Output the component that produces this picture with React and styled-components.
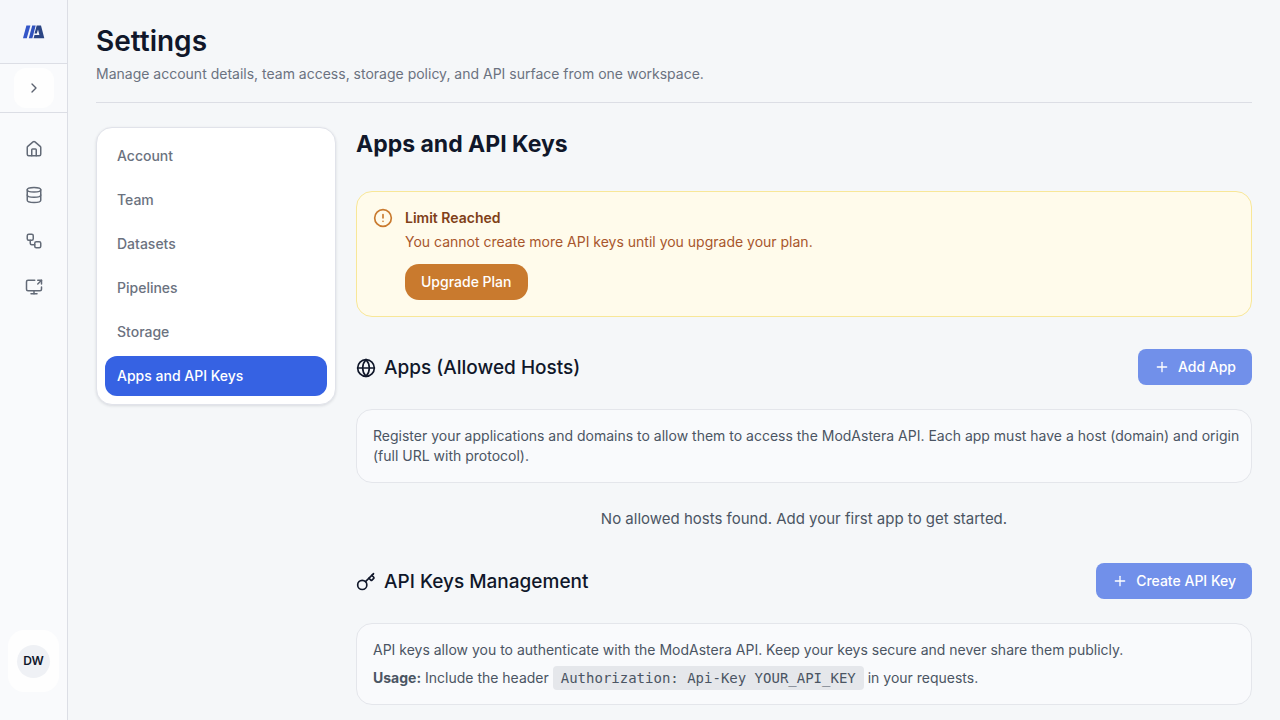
import React from "react";
import styled, { createGlobalStyle } from "styled-components";
import {
  ChevronRight,
  CircleAlert,
  Database,
  Globe,
  House,
  Key,
  Plus,
  ScreenShare,
  Workflow,
} from "lucide-react";

const GlobalStyle = createGlobalStyle`
  *, *::before, *::after { box-sizing: border-box; }
  body {
    margin: 0;
    background: #f5f7f9;
    color: #10172a;
    font-family: Inter, "Liberation Sans", sans-serif;
    font-size: 14px;
    line-height: 20px;
    -webkit-font-smoothing: antialiased;
  }
  h1, h2, h3, p { margin: 0; }
  button { font: inherit; border: 0; cursor: pointer; }
  a { color: inherit; text-decoration: none; }
`;

const Shell = styled.div`
  display: flex;
  height: 100vh;
  overflow: hidden;
`;

const Sidebar = styled.aside`
  flex: none;
  display: flex;
  flex-direction: column;
  width: 68px;
  background: #f9fafc;
  border-right: 1px solid #dcdee5;
`;

const Brand = styled.a`
  display: flex;
  align-items: center;
  justify-content: center;
  height: 64px;
  background: #f5f7fb;
  border-bottom: 1px solid #dcdee5;
`;

const ToggleRow = styled.div`
  display: flex;
  justify-content: center;
  padding: 4px 0;
  border-bottom: 1px solid #dcdee5;
`;

const ToggleButton = styled.button`
  display: grid;
  place-items: center;
  width: 40px;
  height: 40px;
  padding: 0;
  border-radius: 12px;
  background: #fefefe;
  color: #5b6270;
`;

const IconNav = styled.nav`
  flex: 1;
  display: flex;
  flex-direction: column;
  align-items: center;
  gap: 6px;
  padding: 16px 0;
`;

const IconLink = styled.a`
  display: grid;
  place-items: center;
  width: 40px;
  height: 40px;
  border-radius: 12px;
  && { color: #636a77; }
`;

const UserButton = styled.button`
  align-self: center;
  display: grid;
  place-items: center;
  width: 51px;
  height: 62px;
  margin-bottom: 28px;
  padding: 0;
  border-radius: 16px;
  background: #fefefe;
`;

const Avatar = styled.span`
  display: grid;
  place-items: center;
  width: 33px;
  height: 33px;
  border-radius: 50%;
  background: #eff1f5;
  color: #10172a;
  font-size: 12px;
  line-height: 16px;
  font-weight: 600;
`;

const Main = styled.main`
  flex: 1;
  min-width: 0;
  overflow: hidden;
  padding: 23px 28px;
`;

const PageHeader = styled.header`
  padding-bottom: 18px;
  border-bottom: 1px solid #dcdee5;
`;

const PageTitle = styled.h1`
  font-size: 28px;
  line-height: 36px;
  font-weight: 600;
`;

const PageSubtitle = styled.p`
  margin-top: 5px;
  color: #6b7280;
`;

const Columns = styled.div`
  display: grid;
  grid-template-columns: 240px minmax(0, 1fr);
  align-items: start;
  gap: 20px;
  margin-top: 24px;
`;

const SettingsNav = styled.nav`
  display: flex;
  flex-direction: column;
  gap: 4px;
  padding: 8px;
  border: 1px solid #e1e3ea;
  border-radius: 16px;
  background: #fff;
  box-shadow: 0 1px 3px rgba(15, 23, 42, 0.12);
`;

const SettingsLink = styled.a`
  padding: 10px 12px;
  border-radius: 12px;
  font-weight: 500;
  && { color: ${(p) => (p.$active ? "#fff" : "#6b7280")}; }
  background: ${(p) => (p.$active ? "#3662e3" : "transparent")};
`;

const Content = styled.div`
  display: flex;
  flex-direction: column;
  gap: 32px;
`;

const ContentTitle = styled.h2`
  padding-top: 2px;
  font-size: 23px;
  line-height: 30px;
  font-weight: 700;
`;

const Alert = styled.div`
  display: flex;
  gap: 12px;
  padding: 16px;
  border: 1px solid #f8e798;
  border-radius: 16px;
  background: #fffbeb;
  color: #a8562c;

  > svg { flex: none; color: #c97a2e; }
`;

const AlertTitle = styled.h3`
  color: #804018;
  font-size: 14px;
  line-height: 20px;
  font-weight: 600;
`;

const AlertText = styled.p`
  margin-top: 4px;
`;

const Button = styled.button`
  display: inline-flex;
  align-items: center;
  gap: 8px;
  height: 36px;
  padding: 0 16px;
  border-radius: ${(p) => (p.$warning ? "14px" : "8px")};
  background: ${(p) => (p.$warning ? "#c97a2e" : "#7190ea")};
  color: #fff;
  font-weight: 500;
`;

const UpgradeButton = styled(Button)`
  margin-top: 12px;
`;

const Section = styled.section`
  display: flex;
  flex-direction: column;
  gap: 24px;
`;

const SectionHeader = styled.div`
  display: flex;
  align-items: center;
  justify-content: space-between;
`;

const SectionTitle = styled.h3`
  display: flex;
  align-items: center;
  gap: 8px;
  padding-top: 2px;
  font-size: 19px;
  line-height: 28px;
  font-weight: 500;
`;

const InfoCard = styled.div`
  display: flex;
  flex-direction: column;
  gap: 8px;
  padding: 16px 8px 16px 16px;
  border: 1px solid #e4e6eb;
  border-radius: 16px;
  background: #f9fafc;
  color: #4b5563;
`;

const Code = styled.code`
  padding: 4px 8px;
  border-radius: 4px;
  background: #e5e7eb;
  font-family: "DejaVu Sans Mono", monospace;
  font-size: 14px;
`;

const EmptyText = styled.p`
  color: #4b5563;
  font-size: 15px;
  line-height: 24px;
  text-align: center;
`;

const Logo = () => (
  <svg width="22" height="14" viewBox="0 0 22 14" aria-hidden="true">
    <path d="M3.400 0.500h4L3.800 13.200H0z" fill="#3456c8" />
    <path d="M9.200 0.500h3.500L9.400 13.200H5.800z" fill="#3052bd" />
    <path
      d="M13.700 0.500h4.300l3.300 12.700H10.600l0.900-3.200h4.900L15 4.500l-1.200 4h-2.300z"
      fill="#2b4584"
    />
  </svg>
);

const sideLinks = [
  ["Home", House],
  ["Datasets", Database],
  ["Pipelines", Workflow],
  ["Deployments", ScreenShare],
];

const settingsLinks = [
  "Account",
  "Team",
  "Datasets",
  "Pipelines",
  "Storage",
  "Apps and API Keys",
];

export default function App() {
  return (
    <>
      <GlobalStyle />
      <Shell>
        <Sidebar>
          <Brand href="#" aria-label="ModAstera">
            <Logo />
          </Brand>
          <ToggleRow>
            <ToggleButton type="button" aria-label="Expand sidebar">
              <ChevronRight size={16} />
            </ToggleButton>
          </ToggleRow>
          <IconNav aria-label="Main">
            {sideLinks.map(([label, Icon]) => (
              <IconLink key={label} href="#" aria-label={label}>
                <Icon size={18} strokeWidth={2} />
              </IconLink>
            ))}
          </IconNav>
          <UserButton type="button">
            <Avatar>DW</Avatar>
          </UserButton>
        </Sidebar>
        <Main>
          <PageHeader>
            <PageTitle>Settings</PageTitle>
            <PageSubtitle>
              Manage account details, team access, storage policy, and API
              surface from one workspace.
            </PageSubtitle>
          </PageHeader>
          <Columns>
            <SettingsNav aria-label="Settings">
              {settingsLinks.map((label) => (
                <SettingsLink
                  key={label}
                  href="#"
                  $active={label === "Apps and API Keys"}
                >
                  {label}
                </SettingsLink>
              ))}
            </SettingsNav>
            <Content>
              <ContentTitle>Apps and API Keys</ContentTitle>
              <Alert role="alert">
                <CircleAlert size={20} />
                <div>
                  <AlertTitle>Limit Reached</AlertTitle>
                  <AlertText>
                    You cannot create more API keys until you upgrade your plan.
                  </AlertText>
                  <UpgradeButton type="button" $warning>
                    Upgrade Plan
                  </UpgradeButton>
                </div>
              </Alert>
              <Section>
                <SectionHeader>
                  <SectionTitle>
                    <Globe size={20} />
                    Apps (Allowed Hosts)
                  </SectionTitle>
                  <Button type="button">
                    <Plus size={16} />
                    Add App
                  </Button>
                </SectionHeader>
                <InfoCard>
                  <p>
                    Register your applications and domains to allow them to
                    access the ModAstera API. Each app must have a host (domain)
                    and origin (full URL with protocol).
                  </p>
                </InfoCard>
                <EmptyText>
                  No allowed hosts found. Add your first app to get started.
                </EmptyText>
              </Section>
              <Section>
                <SectionHeader>
                  <SectionTitle>
                    <Key size={20} />
                    API Keys Management
                  </SectionTitle>
                  <Button type="button">
                    <Plus size={16} />
                    Create API Key
                  </Button>
                </SectionHeader>
                <InfoCard>
                  <p>
                    API keys allow you to authenticate with the ModAstera API.
                    Keep your keys secure and never share them publicly.
                  </p>
                  <p>
                    <strong>Usage:</strong> Include the header{" "}
                    <Code>Authorization: Api-Key YOUR_API_KEY</Code> in your
                    requests.
                  </p>
                </InfoCard>
              </Section>
            </Content>
          </Columns>
        </Main>
      </Shell>
    </>
  );
}
